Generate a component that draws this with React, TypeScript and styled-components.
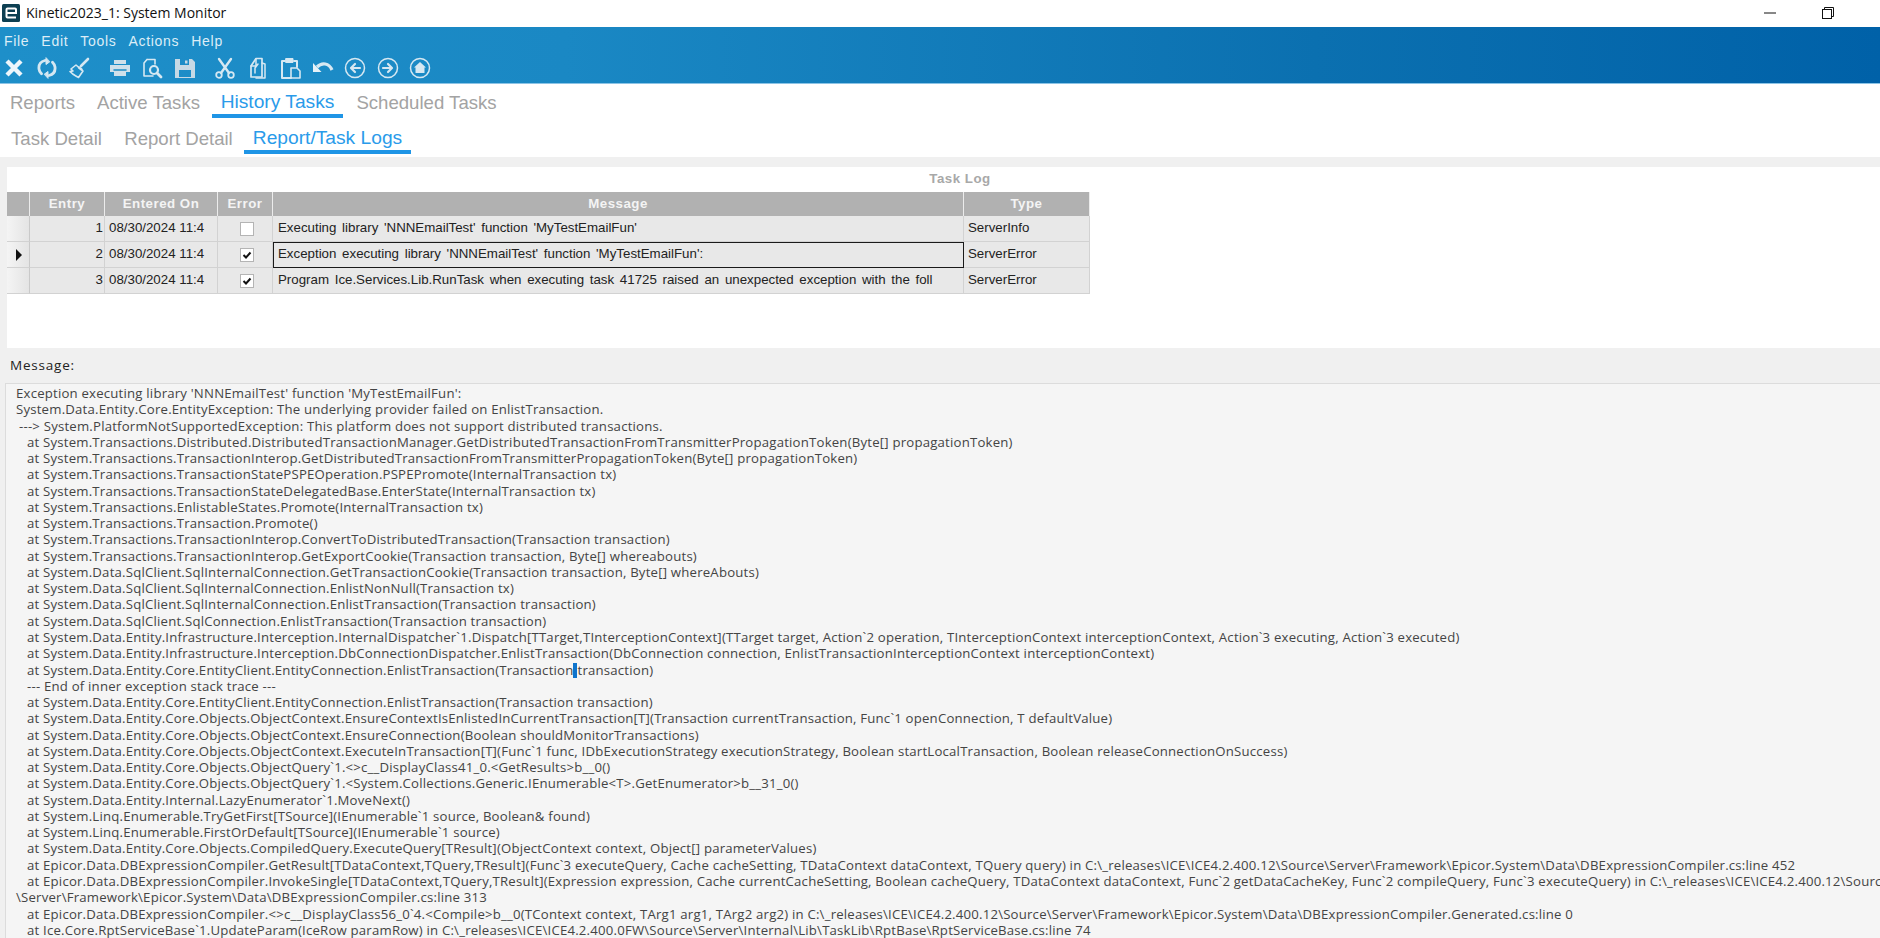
import React from 'react';
import styled, { createGlobalStyle } from 'styled-components';

const GlobalStyle = createGlobalStyle`
    html, body {
        margin: 0;
        height: 100%;
        overflow: hidden;
        background: #fff;
    }
`;

const Window = styled.div`
    display: flex;
    flex-direction: column;
    height: 938px;
    overflow: hidden;
    font-family: 'Liberation Sans', Arial, sans-serif;
`;

const TitleBar = styled.div`
    display: flex;
    align-items: center;
    height: 27px;
    padding-left: 2px;
    padding-bottom: 2px;
    box-sizing: border-box;
    background: #fff;
`;

const Logo = styled.svg`
    width: 18px;
    height: 18px;
    margin-right: 6px;
`;

const TitleText = styled.span`
    flex: 1;
    font-family: 'Open Sans', sans-serif;
    font-size: 14px;
    color: #111;
`;

const WindowControls = styled.div`
    display: flex;
    align-items: center;
    gap: 46px;
    margin-right: 46px;
`;

const Banner = styled.div`
    height: 57px;
    background: linear-gradient(90deg, #1e8fc9 0%, #1a88c4 30%, #0b70b0 70%, #0061a8 100%);
    border-bottom: 1px solid #8cc4e6;
    box-sizing: border-box;
`;

const Menu = styled.div`
    display: flex;
    gap: 12px;
    height: 27px;
    padding: 5px 0 0 4px;
    box-sizing: border-box;
`;

const MenuItem = styled.span`
    font-size: 14px;
    letter-spacing: 0.7px;
    line-height: 18px;
    color: #dcedf7;
`;

const Toolbar = styled.div`
    display: flex;
    align-items: center;
    height: 28px;
    padding-left: 3px;
`;

const ToolIcon = styled.svg<{ $gap?: number }>`
    width: 22px;
    height: 24px;
    margin-right: ${(p) => p.$gap ?? 10.5}px;
    fill: none;
    stroke: #d6e8f2;
    stroke-width: 2;
    stroke-linecap: round;
    stroke-linejoin: round;
    filter: blur(0.35px);
`;

const TabRow = styled.div<{ $height: number; $top: number; $after?: number }>`
    display: flex;
    height: ${(p) => p.$height}px;
    margin-bottom: ${(p) => p.$after ?? 0}px;
    --tab-top: ${(p) => p.$top}px;
    background: #fff;
`;

const Tab = styled.div<{ $active?: boolean; $width: number }>`
    width: ${(p) => p.$width}px;
    height: 100%;
    box-sizing: border-box;
    padding-top: ${(p) => (p.$active ? 'calc(var(--tab-top) - 1px)' : 'var(--tab-top)')};
    text-align: center;
    white-space: nowrap;
    font-size: ${(p) => (p.$active ? 19.2 : 18.6)}px;
    line-height: 22px;
    color: ${(p) => (p.$active ? '#2a9bea' : '#a3a3a3')};
    border-bottom: 4px solid ${(p) => (p.$active ? '#1f95e6' : 'transparent')};
`;

const Body = styled.div`
    flex: 1;
    min-height: 0;
    display: flex;
    flex-direction: column;
    background: #f0f0f0;
    padding-top: 10px;
`;

const GridPanel = styled.div`
    height: 181px;
    margin-left: 7px;
    background: #fff;
    box-sizing: border-box;
`;

const PanelCaption = styled.div`
    height: 25px;
    width: 1906px;
    text-align: center;
    font-size: 13.3px;
    letter-spacing: 0.5px;
    font-weight: 700;
    line-height: 24px;
    color: #a8a8a8;
`;

const Grid = styled.div`
    display: grid;
    grid-template-columns: 23px 75px 113px 55px 691px 126px;
    grid-template-rows: 24px 26px 26px 26px;
    width: 1083px;
    font-size: 13.3px;
`;

const HeaderCell = styled.div`
    display: flex;
    align-items: center;
    justify-content: center;
    padding-bottom: 1px;
    box-sizing: border-box;
    background: #b1b1b1;
    border-right: 1px solid #ececec;
    font-weight: 700;
    letter-spacing: 0.5px;
    color: #f4f4f4;
`;

const Cell = styled.div<{ $align?: string; $selected?: boolean }>`
    display: flex;
    justify-content: ${(p) => p.$align ?? 'flex-start'};
    padding: 4px 1px 0 4px;
    box-sizing: border-box;
    overflow: hidden;
    white-space: nowrap;
    background: #e8e8e8;
    border-right: 1px solid #d2d2d2;
    border-bottom: 1px solid #d2d2d2;
    color: #222;
    ${(p) => p.$selected && 'outline: 1.5px solid #1a1a1a; outline-offset: -1px;'}
`;

const RowHead = styled.div`
    display: flex;
    align-items: center;
    padding-left: 9px;
    box-sizing: border-box;
    background: linear-gradient(90deg, #f4f4f4, #e4e4e4);
    border-right: 1px solid #c9c9c9;
    border-bottom: 1px solid #d2d2d2;
`;

const RowPointer = styled.span`
    width: 0;
    height: 0;
    border-left: 6px solid #111;
    border-top: 6px solid transparent;
    border-bottom: 6px solid transparent;
`;

const MessageText = styled.span`
    padding-left: 1px;
    word-spacing: 2px;
`;

const CheckBox = styled.span`
    display: flex;
    align-items: center;
    justify-content: center;
    width: 12px;
    height: 12px;
    margin-top: 2px;
    background: #fff;
    border: 1px solid #b4b4b4;
`;

const MessageLabel = styled.div`
    height: 35px;
    padding-left: 10px;
    font-family: 'Open Sans', sans-serif;
    font-size: 13.5px;
    letter-spacing: 0.8px;
    line-height: 34px;
    color: #222;
`;

const LogBox = styled.div`
    flex: 1;
    min-height: 0;
    margin-left: 5px;
    padding-top: 1px;
    overflow: hidden;
    background: #f5f5f5;
    border-top: 1px solid #dcdcdc;
    border-left: 1px solid #dcdcdc;
    font-family: 'Open Sans', sans-serif;
    font-size: 13.2px;
    letter-spacing: 0.2px;
    line-height: 16.27px;
    color: #444;
`;

const LogLine = styled.div<{ $indent: number }>`
    height: 16.27px;
    padding-left: ${(p) => p.$indent}px;
    white-space: nowrap;
`;

const Caret = styled.span`
    display: inline-block;
    width: 4px;
    height: 15px;
    vertical-align: -3px;
    background: #0f74cc;
`;

const rows = [
    { entry: 1, error: false, message: "Executing library 'NNNEmailTest' function 'MyTestEmailFun'", type: 'ServerInfo' },
    { entry: 2, error: true, message: "Exception executing library 'NNNEmailTest' function 'MyTestEmailFun':", type: 'ServerError', selected: true },
    { entry: 3, error: true, message: 'Program Ice.Services.Lib.RunTask when executing task 41725 raised an unexpected exception with the foll', type: 'ServerError' },
];

const logLines: [number, string][] = [
    [10, "Exception executing library 'NNNEmailTest' function 'MyTestEmailFun':"],
    [10, 'System.Data.Entity.Core.EntityException: The underlying provider failed on EnlistTransaction.'],
    [13, ' ---> System.PlatformNotSupportedException: This platform does not support distributed transactions.'],
    [21, 'at System.Transactions.Distributed.DistributedTransactionManager.GetDistributedTransactionFromTransmitterPropagationToken(Byte[] propagationToken)'],
    [21, 'at System.Transactions.TransactionInterop.GetDistributedTransactionFromTransmitterPropagationToken(Byte[] propagationToken)'],
    [21, 'at System.Transactions.TransactionStatePSPEOperation.PSPEPromote(InternalTransaction tx)'],
    [21, 'at System.Transactions.TransactionStateDelegatedBase.EnterState(InternalTransaction tx)'],
    [21, 'at System.Transactions.EnlistableStates.Promote(InternalTransaction tx)'],
    [21, 'at System.Transactions.Transaction.Promote()'],
    [21, 'at System.Transactions.TransactionInterop.ConvertToDistributedTransaction(Transaction transaction)'],
    [21, 'at System.Transactions.TransactionInterop.GetExportCookie(Transaction transaction, Byte[] whereabouts)'],
    [21, 'at System.Data.SqlClient.SqlInternalConnection.GetTransactionCookie(Transaction transaction, Byte[] whereAbouts)'],
    [21, 'at System.Data.SqlClient.SqlInternalConnection.EnlistNonNull(Transaction tx)'],
    [21, 'at System.Data.SqlClient.SqlInternalConnection.EnlistTransaction(Transaction transaction)'],
    [21, 'at System.Data.SqlClient.SqlConnection.EnlistTransaction(Transaction transaction)'],
    [21, 'at System.Data.Entity.Infrastructure.Interception.InternalDispatcher`1.Dispatch[TTarget,TInterceptionContext](TTarget target, Action`2 operation, TInterceptionContext interceptionContext, Action`3 executing, Action`3 executed)'],
    [21, 'at System.Data.Entity.Infrastructure.Interception.DbConnectionDispatcher.EnlistTransaction(DbConnection connection, EnlistTransactionInterceptionContext interceptionContext)'],
    [21, 'at System.Data.Entity.Core.EntityClient.EntityConnection.EnlistTransaction(Transaction|transaction)'],
    [21, '--- End of inner exception stack trace ---'],
    [21, 'at System.Data.Entity.Core.EntityClient.EntityConnection.EnlistTransaction(Transaction transaction)'],
    [21, 'at System.Data.Entity.Core.Objects.ObjectContext.EnsureContextIsEnlistedInCurrentTransaction[T](Transaction currentTransaction, Func`1 openConnection, T defaultValue)'],
    [21, 'at System.Data.Entity.Core.Objects.ObjectContext.EnsureConnection(Boolean shouldMonitorTransactions)'],
    [21, 'at System.Data.Entity.Core.Objects.ObjectContext.ExecuteInTransaction[T](Func`1 func, IDbExecutionStrategy executionStrategy, Boolean startLocalTransaction, Boolean releaseConnectionOnSuccess)'],
    [21, 'at System.Data.Entity.Core.Objects.ObjectQuery`1.<>c__DisplayClass41_0.<GetResults>b__0()'],
    [21, 'at System.Data.Entity.Core.Objects.ObjectQuery`1.<System.Collections.Generic.IEnumerable<T>.GetEnumerator>b__31_0()'],
    [21, 'at System.Data.Entity.Internal.LazyEnumerator`1.MoveNext()'],
    [21, 'at System.Linq.Enumerable.TryGetFirst[TSource](IEnumerable`1 source, Boolean& found)'],
    [21, 'at System.Linq.Enumerable.FirstOrDefault[TSource](IEnumerable`1 source)'],
    [21, 'at System.Data.Entity.Core.Objects.CompiledQuery.ExecuteQuery[TResult](ObjectContext context, Object[] parameterValues)'],
    [21, 'at Epicor.Data.DBExpressionCompiler.GetResult[TDataContext,TQuery,TResult](Func`3 executeQuery, Cache cacheSetting, TDataContext dataContext, TQuery query) in C:\\_releases\\ICE\\ICE4.2.400.12\\Source\\Server\\Framework\\Epicor.System\\Data\\DBExpressionCompiler.cs:line 452'],
    [21, 'at Epicor.Data.DBExpressionCompiler.InvokeSingle[TDataContext,TQuery,TResult](Expression expression, Cache currentCacheSetting, Boolean cacheQuery, TDataContext dataContext, Func`2 getDataCacheKey, Func`2 compileQuery, Func`3 executeQuery) in C:\\_releases\\ICE\\ICE4.2.400.12\\Source'],
    [10, '\\Server\\Framework\\Epicor.System\\Data\\DBExpressionCompiler.cs:line 313'],
    [21, 'at Epicor.Data.DBExpressionCompiler.<>c__DisplayClass56_0`4.<Compile>b__0(TContext context, TArg1 arg1, TArg2 arg2) in C:\\_releases\\ICE\\ICE4.2.400.12\\Source\\Server\\Framework\\Epicor.System\\Data\\DBExpressionCompiler.Generated.cs:line 0'],
    [21, 'at Ice.Core.RptServiceBase`1.UpdateParam(IceRow paramRow) in C:\\_releases\\ICE\\ICE4.2.400.0FW\\Source\\Server\\Internal\\Lib\\TaskLib\\RptBase\\RptServiceBase.cs:line 74'],
];

const CheckMark = () => (
    <svg width="10" height="10" viewBox="0 0 10 10">
        <path d="M1.5 5 L4 7.5 L8.5 2.5" fill="none" stroke="#111" strokeWidth="2" />
    </svg>
);

const App: React.FC = () => (
    <Window>
        <GlobalStyle />
        <TitleBar>
            <Logo viewBox="0 0 18 18">
                <rect width="18" height="18" rx="1.5" fill="#0d3f52" />
                <path d="M5 9h9V5.500a1 1 0 0 0-1-1H5.500a1 1 0 0 0-1 1v7a1 1 0 0 0 1 1H14" fill="none" stroke="#fff" strokeWidth="2" />
            </Logo>
            <TitleText>Kinetic2023_1: System Monitor</TitleText>
            <WindowControls>
                <svg width="12" height="12" viewBox="0 0 12 12">
                    <path d="M0 6h12" stroke="#111" strokeWidth="1" />
                </svg>
                <svg width="12" height="12" viewBox="0 0 12 12" fill="none" stroke="#111" strokeWidth="1">
                    <rect x="0.5" y="2.5" width="9" height="9" />
                    <path d="M2.5 2.5V0.5H11.5V9.5H9.5" />
                </svg>
            </WindowControls>
        </TitleBar>
        <Banner>
            <Menu>
                <MenuItem>File</MenuItem>
                <MenuItem>Edit</MenuItem>
                <MenuItem>Tools</MenuItem>
                <MenuItem>Actions</MenuItem>
                <MenuItem>Help</MenuItem>
            </Menu>
            <Toolbar>
                <ToolIcon viewBox="0 0 22 24">
                    <path d="M4 5l14 14M18 5L4 19" strokeWidth="4.400" strokeLinecap="butt" stroke="#eef6fb" />
                </ToolIcon>
                <ToolIcon viewBox="0 0 22 24">
                    <path d="M9 4.500C5 5.500 2.500 8.500 3 13c.2 2 1.200 3.500 2.500 4.800M13 19.500c4-1 6.500-4 6-8.500-.2-2-1.200-3.500-2.500-4.800" strokeWidth="2.800" />
                    <path d="M10 2v6.500L13.500 6zM12 22v-6.500L8.500 18z" fill="#d6e8f2" strokeWidth="1" />
                </ToolIcon>
                <ToolIcon viewBox="0 0 22 24" $gap={19}>
                    <path d="M13 10L20 3" strokeWidth="2.600" />
                    <path d="M8 9l7 6-4.500 6.500C8 20 5 19 2 15.500L5 15l-2-2z" strokeWidth="1.600" />
                    <path d="M11 11.500l2.500 2" strokeWidth="2.400" />
                </ToolIcon>
                <ToolIcon viewBox="0 0 22 24">
                    <path d="M5 4h12v4H5zM1 9h20v7H1zM5 15h12v5H5z" fill="#cfe0ea" stroke="none" />
                    <path d="M5 14h12" stroke="#1d8ac4" strokeWidth="1.500" />
                </ToolIcon>
                <ToolIcon viewBox="0 0 22 24">
                    <path d="M5 3.500L2 7v13h9M5 3.500h8V8" strokeWidth="1.600" />
                    <circle cx="12" cy="14" r="4" strokeWidth="2.200" />
                    <path d="M15 17l4 4" strokeWidth="2.800" />
                </ToolIcon>
                <ToolIcon viewBox="0 0 22 24" $gap={18}>
                    <path fillRule="evenodd" d="M1 3h17l3 3v16H1zM6 3v6h9V3zM11 4.500h2.500v3H11zM5 14v7h12v-7z" fill="#c6d9e5" stroke="none" />
                </ToolIcon>
                <ToolIcon viewBox="0 0 22 24">
                    <circle cx="5" cy="19" r="2.800" strokeWidth="1.800" />
                    <circle cx="17" cy="19" r="2.800" strokeWidth="1.800" />
                    <path d="M7 17L17 3M15 17L5 3" strokeWidth="2.400" />
                </ToolIcon>
                <ToolIcon viewBox="0 0 22 24">
                    <path d="M9 2.500h6v18.500H4V10z" strokeWidth="1.700" />
                    <path d="M9 3v7H4M11 8l-3 4v5" strokeWidth="1.500" />
                    <path d="M15 7l3 1v14h-9" strokeWidth="1.500" />
                </ToolIcon>
                <ToolIcon viewBox="0 0 22 24">
                    <path d="M6 5H3v17h9M15 5h3v6" strokeWidth="2" />
                    <rect x="7" y="2.500" width="7" height="4" fill="#d6e8f2" strokeWidth="1" />
                    <path d="M12 12h6l3 3v7h-9z" strokeWidth="1.600" />
                </ToolIcon>
                <ToolIcon viewBox="0 0 22 24">
                    <path d="M5 11c5-5 12-4 15 3" strokeWidth="3.200" strokeLinecap="butt" />
                    <path d="M1 7v9h8.500z" fill="#e6f1f7" stroke="none" />
                </ToolIcon>
                <ToolIcon viewBox="0 0 22 24">
                    <circle cx="11" cy="12" r="9.500" strokeWidth="1.500" />
                    <path d="M16 12H8M11 8l-4 4 4 4" strokeWidth="2.200" />
                </ToolIcon>
                <ToolIcon viewBox="0 0 22 24">
                    <circle cx="11" cy="12" r="9.500" strokeWidth="1.500" />
                    <path d="M6 12h8M11 8l4 4-4 4" strokeWidth="2.200" />
                </ToolIcon>
                <ToolIcon viewBox="0 0 22 24" $gap={0}>
                    <circle cx="11" cy="12" r="9.500" strokeWidth="1.500" />
                    <path d="M11 6l6 5.500h-1.500V17h-9v-5.500H5z" fill="#d6e8f2" stroke="none" />
                </ToolIcon>
            </Toolbar>
        </Banner>
        <TabRow $height={34} $top={8}>
            <Tab $width={85}>Reports</Tab>
            <Tab $width={127}>Active Tasks</Tab>
            <Tab $width={131} $active>History Tasks</Tab>
            <Tab $width={167}>Scheduled Tasks</Tab>
        </TabRow>
        <TabRow $height={36} $top={10} $after={3}>
            <Tab $width={113}>Task Detail</Tab>
            <Tab $width={131}>Report Detail</Tab>
            <Tab $width={167} $active>Report/Task Logs</Tab>
        </TabRow>
        <Body>
            <GridPanel>
                <PanelCaption>Task Log</PanelCaption>
                <Grid>
                    <HeaderCell />
                    <HeaderCell>Entry</HeaderCell>
                    <HeaderCell>Entered On</HeaderCell>
                    <HeaderCell>Error</HeaderCell>
                    <HeaderCell>Message</HeaderCell>
                    <HeaderCell>Type</HeaderCell>
                    {rows.map((row) => (
                        <React.Fragment key={row.entry}>
                            <RowHead>{row.selected && <RowPointer />}</RowHead>
                            <Cell $align="flex-end">{row.entry}</Cell>
                            <Cell>08/30/2024 11:4</Cell>
                            <Cell $align="center">
                                <CheckBox>{row.error && <CheckMark />}</CheckBox>
                            </Cell>
                            <Cell $selected={row.selected}>
                                <MessageText>{row.message}</MessageText>
                            </Cell>
                            <Cell>{row.type}</Cell>
                        </React.Fragment>
                    ))}
                </Grid>
            </GridPanel>
            <MessageLabel>Message:</MessageLabel>
            <LogBox>
                {logLines.map(([indent, text]) => {
                    const [before, after] = text.split('|');
                    return (
                        <LogLine key={text} $indent={indent}>
                            {before}
                            {after !== undefined && (
                                <>
                                    <Caret />
                                    {after}
                                </>
                            )}
                        </LogLine>
                    );
                })}
            </LogBox>
        </Body>
    </Window>
);

export default App;
